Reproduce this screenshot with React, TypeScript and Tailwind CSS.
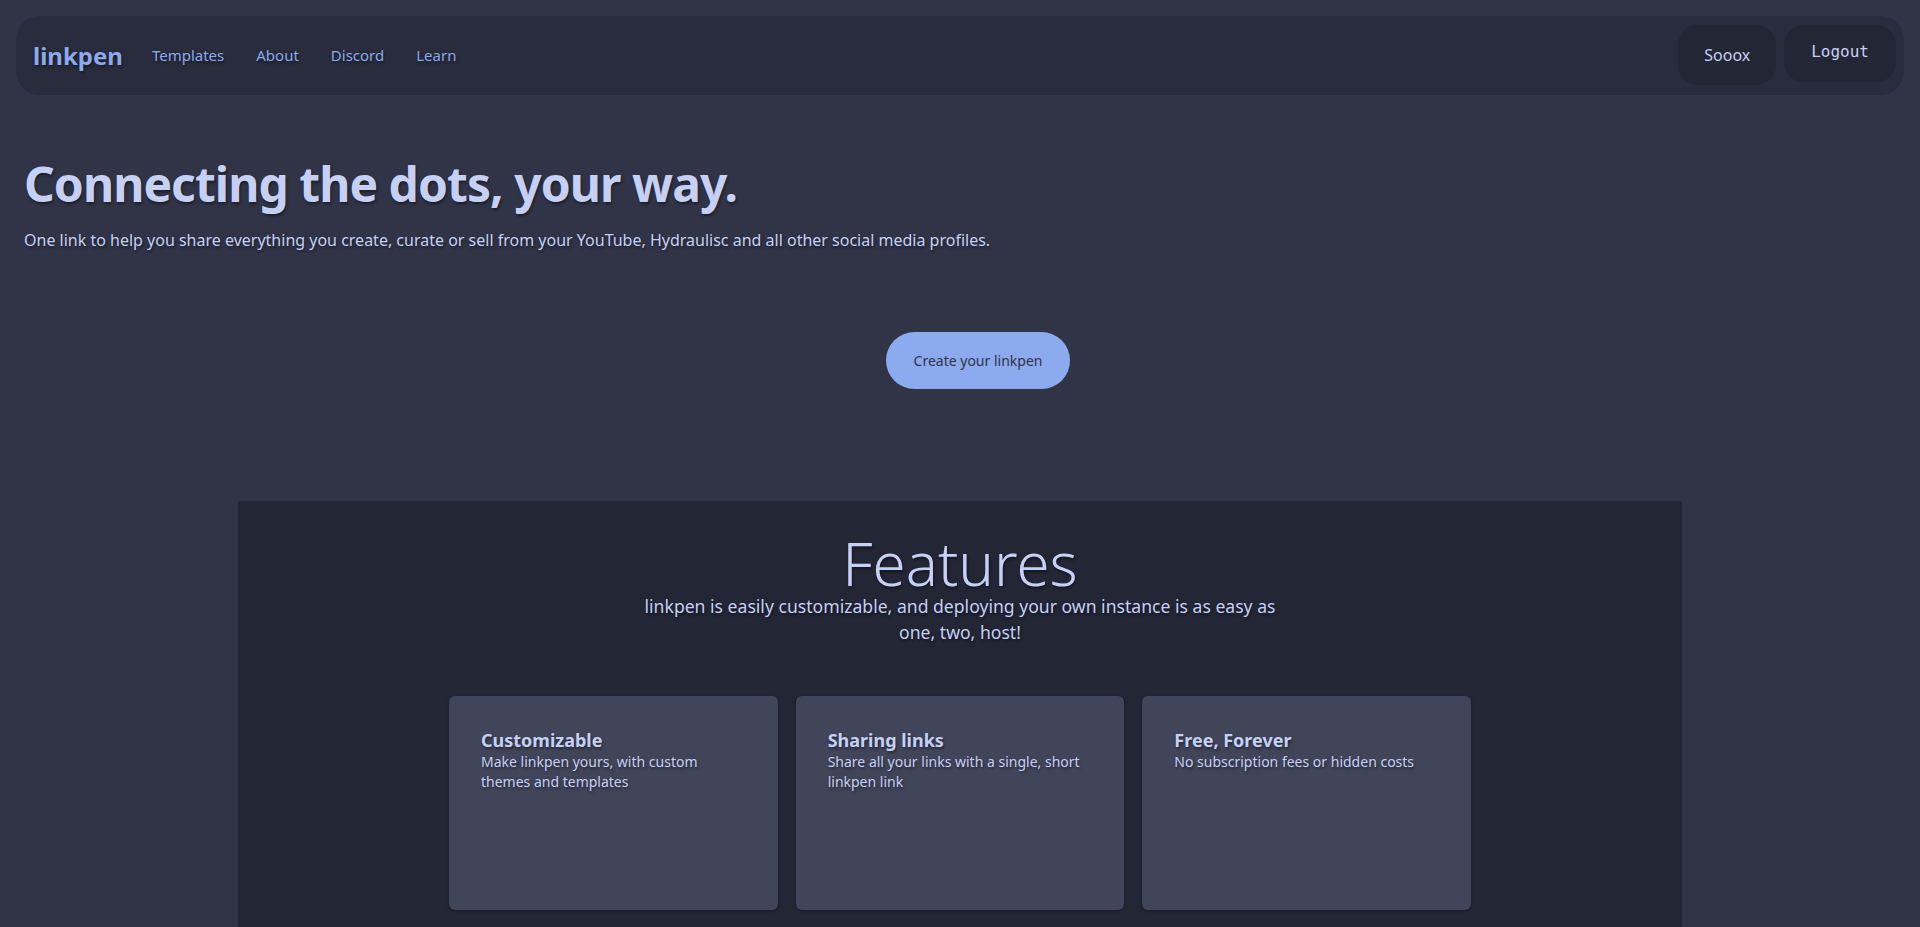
import React from "react";

const features = [
  {
    title: "Customizable",
    desc: "Make linkpen yours, with custom themes and templates",
  },
  {
    title: "Sharing links",
    desc: "Share all your links with a single, short linkpen link",
  },
  {
    title: "Free, Forever",
    desc: "No subscription fees or hidden costs",
  },
];

export default function App() {
  return (
    <div className="flex h-screen flex-col overflow-hidden bg-[#303446] font-['Noto_Sans',sans-serif] text-[#c6d0f5] [text-shadow:1px_2px_3px_rgba(0,0,0,0.45)]">
      <nav className="mx-4 mt-4 flex h-[79px] shrink-0 items-start justify-between rounded-3xl bg-[#292c3c] pl-[17px] pr-2">
        <div className="flex h-full items-center">
          <span className="text-2xl font-bold text-[#8caaee]">linkpen</span>
          <div className="ml-[29px] flex items-center gap-8 text-[15px] text-[#8caaee]">
            <a href="#">Templates</a>
            <a href="#">About</a>
            <a href="#">Discord</a>
            <a href="#">Learn</a>
          </div>
        </div>
        <div className="flex items-start gap-2 pt-[9px]">
          <button className="flex h-[60px] items-center rounded-[20px] bg-[#232634] px-[26px] text-base text-[#c6d0f5]">
            Sooox
          </button>
          <button className="flex h-[57px] items-center rounded-[20px] bg-[#232634] px-[27px] pb-[3px] font-['DejaVu_Sans_Mono',monospace] text-base text-[#c6d0f5]">
            Logout
          </button>
        </div>
      </nav>

      <section className="mt-[65px] shrink-0 px-6">
        <h1 className="text-5xl leading-none font-bold tracking-[-0.02em] text-[#c6d0f5]">
          Connecting the dots, your way.
        </h1>
        <p className="mt-5 text-base leading-6 text-[#c6d0f5]">
          One link to help you share everything you create, curate or sell from your YouTube, Hydraulisc and all other social media profiles.
        </p>
        <div className="mt-[80px] flex justify-center">
          <button className="ml-9 flex h-[57px] w-[184px] items-center justify-center rounded-full bg-[#8caaee] text-sm text-[#303446]">
            Create your linkpen
          </button>
        </div>
      </section>

      <section className="mx-auto mt-[112px] w-[1444px] flex-1 bg-[#232634] pt-[32px]">
        <h2 className="text-center text-6xl leading-none font-light text-[#c6d0f5]">
          Features
        </h2>
        <p className="mx-auto max-w-[650px] text-center text-[17.6px] leading-[26px] text-[#c6d0f5]">
          linkpen is easily customizable, and deploying your own instance is as easy as one, two, host!
        </p>
        <div className="mx-auto mt-[51px] grid w-[1022px] grid-cols-3 gap-[18px]">
          {features.map((f) => (
            <div
              key={f.title}
              className="h-[214px] rounded-md bg-[#414559] p-8 shadow-[0_1px_3px_rgba(0,0,0,0.35)]"
            >
              <h3 className="text-lg leading-6 font-bold text-[#c6d0f5]">{f.title}</h3>
              <p className="text-sm leading-5 text-[#c6d0f5]">{f.desc}</p>
            </div>
          ))}
        </div>
      </section>
    </div>
  );
}
